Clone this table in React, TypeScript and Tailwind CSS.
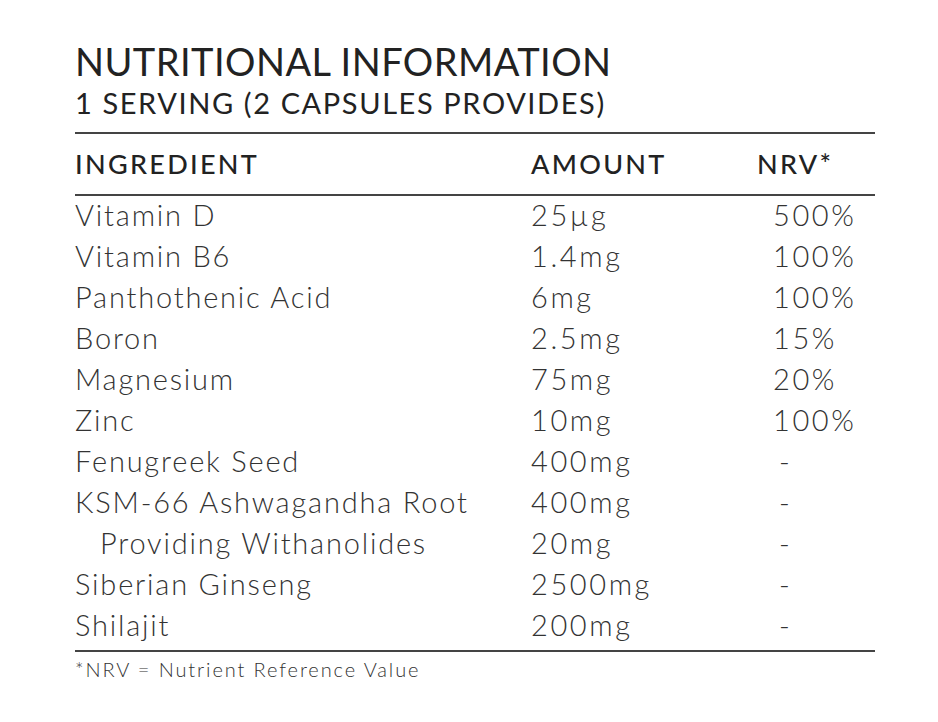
const rows: { name: string; amount: string; nrv: string; indent?: boolean }[] = [
  { name: 'Vitamin D', amount: '25µg', nrv: '500%' },
  { name: 'Vitamin B6', amount: '1.4mg', nrv: '100%' },
  { name: 'Panthothenic Acid', amount: '6mg', nrv: '100%' },
  { name: 'Boron', amount: '2.5mg', nrv: '15%' },
  { name: 'Magnesium', amount: '75mg', nrv: '20%' },
  { name: 'Zinc', amount: '10mg', nrv: '100%' },
  { name: 'Fenugreek Seed', amount: '400mg', nrv: '-' },
  { name: 'KSM-66 Ashwagandha Root', amount: '400mg', nrv: '-' },
  { name: 'Providing Withanolides', amount: '20mg', nrv: '-', indent: true },
  { name: 'Siberian Ginseng', amount: '2500mg', nrv: '-' },
  { name: 'Shilajit', amount: '200mg', nrv: '-' },
];

export default function App() {
  return (
    <div className="min-h-screen bg-white font-['Lato',sans-serif] text-[#222]">
      <div className="w-[800px] ml-[75px] pt-[38px]">
        {/* Heading */}
        <h1 className="text-[38px] leading-[46px] font-normal tracking-[0.45px]">NUTRITIONAL INFORMATION</h1>
        <h2 className="text-[29px] leading-[37px] font-normal tracking-[1.6px]">1 SERVING (2 CAPSULES PROVIDES)</h2>

        {/* Table */}
        <div className="mt-[11px] border-t-2 border-[#444]">
          <div className="grid grid-cols-[456px_226px_1fr] text-[27px] leading-[60px] font-medium tracking-[2.3px] border-b-2 border-[#444]">
            <div>INGREDIENT</div>
            <div>AMOUNT</div>
            <div>NRV*</div>
          </div>
          <div className="border-b-2 border-[#444]">
            <div className="-mt-[2px] pb-[5px] text-[#333] font-light text-[29px]">
              {rows.map((r) => (
                <div key={r.name} className="grid grid-cols-[456px_226px_1fr] leading-[41px]">
                  <div className={r.indent ? 'pl-[25px] tracking-[1.8px]' : 'tracking-[1.8px]'}>{r.name}</div>
                  <div className="tracking-[2.6px]">{r.amount}</div>
                  <div className={r.nrv === '-' ? 'pl-[22px]' : 'pl-[16px] tracking-[2.6px]'}>{r.nrv}</div>
                </div>
              ))}
            </div>
          </div>
        </div>
        <p className="mt-[3px] text-[20px] leading-[28px] font-light tracking-[1.9px] text-[#333]">*NRV = Nutrient Reference Value</p>
      </div>
    </div>
  );
}
